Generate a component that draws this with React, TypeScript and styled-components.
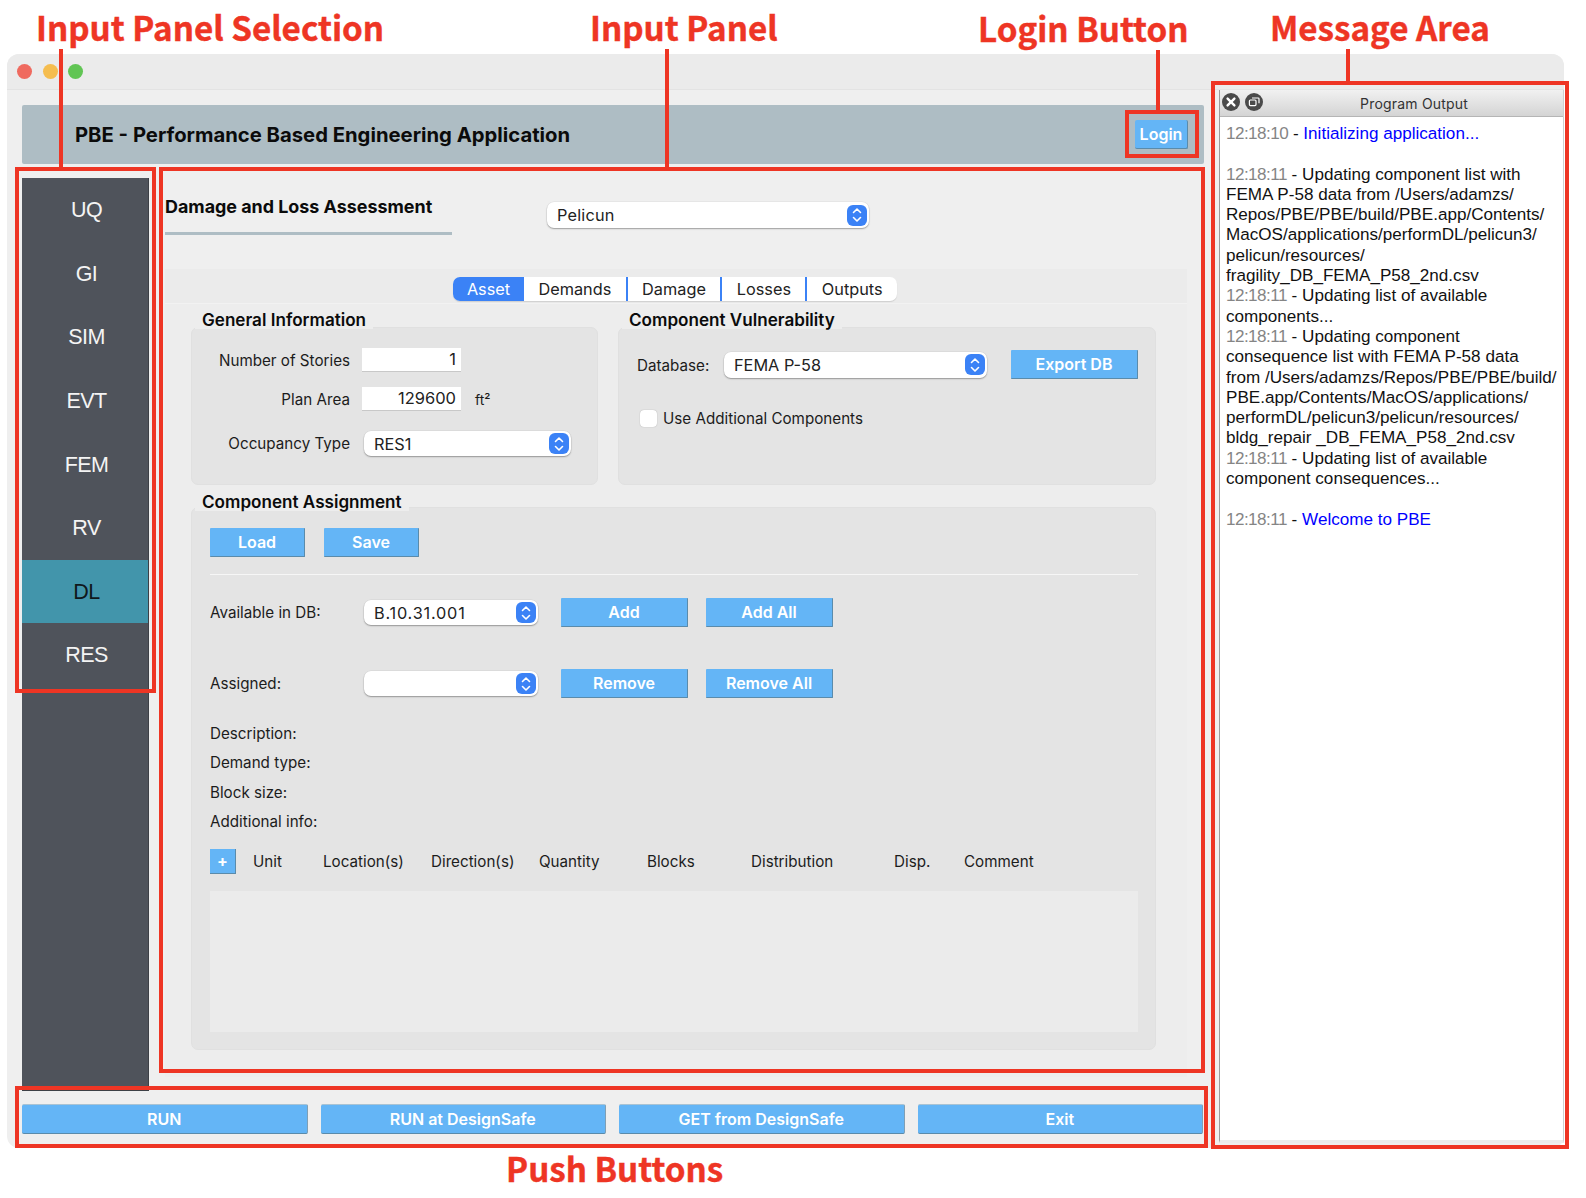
import styled, { createGlobalStyle } from 'styled-components';

const GlobalStyle = createGlobalStyle`
    html, body {
        margin: 0;
        padding: 0;
        background: #fff;
    }
    body {
        font-family: Inter, 'Liberation Sans', sans-serif;
        color: #111;
    }
`;

const NAV_ITEMS = ['UQ', 'GI', 'SIM', 'EVT', 'FEM', 'RV', 'DL', 'RES'];
const TABS = ['Asset', 'Demands', 'Damage', 'Losses', 'Outputs'];
const TABLE_COLUMNS = ['Unit', 'Location(s)', 'Direction(s)', 'Quantity', 'Blocks', 'Distribution', 'Disp.', 'Comment'];
const INFO_LINES = ['Description:', 'Demand type:', 'Block size:', 'Additional info:'];
const FOOTER_BUTTONS = ['RUN', 'RUN at DesignSafe', 'GET from DesignSafe', 'Exit'];

const LOG_LINES: { time?: string; text: string; blue?: boolean }[] = [
    { time: '12:18:10', text: 'Initializing application...', blue: true },
    { text: '' },
    { time: '12:18:11', text: 'Updating component list with' },
    { text: 'FEMA P-58 data from /Users/adamzs/' },
    { text: 'Repos/PBE/PBE/build/PBE.app/Contents/' },
    { text: 'MacOS/applications/performDL/pelicun3/' },
    { text: 'pelicun/resources/' },
    { text: 'fragility_DB_FEMA_P58_2nd.csv' },
    { time: '12:18:11', text: 'Updating list of available' },
    { text: 'components...' },
    { time: '12:18:11', text: 'Updating component' },
    { text: 'consequence list with FEMA P-58 data' },
    { text: 'from /Users/adamzs/Repos/PBE/PBE/build/' },
    { text: 'PBE.app/Contents/MacOS/applications/' },
    { text: 'performDL/pelicun3/pelicun/resources/' },
    { text: 'bldg_repair _DB_FEMA_P58_2nd.csv' },
    { time: '12:18:11', text: 'Updating list of available' },
    { text: 'component consequences...' },
    { text: '' },
    { time: '12:18:11', text: 'Welcome to PBE', blue: true },
];

const Stepper = () => (
    <StepperBox>
        <svg width="12" height="18" viewBox="0 0 12 18" fill="none" stroke="#fff" strokeWidth="1.6" strokeLinecap="round" strokeLinejoin="round">
            <path d="M2.5 6.5 6 3l3.5 3.5" />
            <path d="M2.5 11.5 6 15l3.5-3.5" />
        </svg>
    </StepperBox>
);

interface ComboBoxProps {
    value?: string;
    width: number;
    height?: number;
    tracking?: number;
}

const ComboBox = ({ value, width, height = 25, tracking = 0 }: ComboBoxProps) => (
    <Combo $width={width} $height={height} $tracking={tracking}>
        <span>{value}</span>
        <Stepper />
    </Combo>
);

const App = () => {
    return (
        <Page>
            <GlobalStyle />
            <AppWindow>
                <TitleBar>
                    <Light $color="#ef6a5f" />
                    <Light $color="#f5bd4f" />
                    <Light $color="#61c554" />
                </TitleBar>
                <Content>
                    <Header>
                        <h1>PBE - Performance Based Engineering Application</h1>
                        <LoginButton>Login</LoginButton>
                    </Header>
                    <MainRow>
                        <Sidebar>
                            {NAV_ITEMS.map((item) => (
                                <NavItem key={item} $active={item === 'DL'}>
                                    {item}
                                </NavItem>
                            ))}
                        </Sidebar>
                        <Panel>
                            <PanelHead>
                                <PanelTitle>Damage and Loss Assessment</PanelTitle>
                                <PanelSelect>
                                    <ComboBox value="Pelicun" width={322} height={26} tracking={0.2} />
                                </PanelSelect>
                            </PanelHead>
                            <TabBand>
                                <TabBar>
                                    {TABS.map((tab, i) => (
                                        <Tab key={tab} $active={i === 0} $divider={i > 1}>
                                            {tab}
                                        </Tab>
                                    ))}
                                </TabBar>
                                <TabPane>
                                    <GroupRow>
                                        <GroupBox $width={407} $height={158}>
                                            <Legend>General Information</Legend>
                                            <StoryRow>
                                                <FieldLabel>Number of Stories</FieldLabel>
                                                <NumberInput>1</NumberInput>
                                            </StoryRow>
                                            <AreaRow>
                                                <FieldLabel>Plan Area</FieldLabel>
                                                <NumberInput>129600</NumberInput>
                                                <Unit>ft²</Unit>
                                            </AreaRow>
                                            <OccupancyRow>
                                                <FieldLabel>Occupancy Type</FieldLabel>
                                                <ComboBox value="RES1" width={207} />
                                            </OccupancyRow>
                                        </GroupBox>
                                        <GroupBox $width={538} $height={158}>
                                            <Legend>Component Vulnerability</Legend>
                                            <DatabaseRow>
                                                <DatabaseLabel>Database:</DatabaseLabel>
                                                <ComboBox value="FEMA P-58" width={263} height={26} />
                                                <BlueButton $width={127}>Export DB</BlueButton>
                                            </DatabaseRow>
                                            <CheckRow>
                                                <CheckBox />
                                                <span>Use Additional Components</span>
                                            </CheckRow>
                                        </GroupBox>
                                    </GroupRow>
                                    <AssignBox>
                                        <AssignLegend>Component Assignment</AssignLegend>
                                        <FileButtons>
                                            <BlueButton $width={95}>Load</BlueButton>
                                            <BlueButton $width={95}>Save</BlueButton>
                                        </FileButtons>
                                        <Divider />
                                        <AvailableRow>
                                            <AssignLabel>Available in DB:</AssignLabel>
                                            <ComboBox value="B.10.31.001" width={174} tracking={0.8} />
                                            <BlueButton $width={127}>Add</BlueButton>
                                            <BlueButton $width={127}>Add All</BlueButton>
                                        </AvailableRow>
                                        <AssignedRow>
                                            <AssignLabel>Assigned:</AssignLabel>
                                            <ComboBox width={174} />
                                            <BlueButton $width={127}>Remove</BlueButton>
                                            <BlueButton $width={127}>Remove All</BlueButton>
                                        </AssignedRow>
                                        <InfoList>
                                            {INFO_LINES.map((line) => (
                                                <div key={line}>{line}</div>
                                            ))}
                                        </InfoList>
                                        <TableHead>
                                            <PlusButton>+</PlusButton>
                                            {TABLE_COLUMNS.map((col) => (
                                                <span key={col}>{col}</span>
                                            ))}
                                        </TableHead>
                                        <TableBody />
                                    </AssignBox>
                                </TabPane>
                            </TabBand>
                        </Panel>
                    </MainRow>
                    <Footer>
                        {FOOTER_BUTTONS.map((label) => (
                            <FooterButton key={label}>{label}</FooterButton>
                        ))}
                    </Footer>
                </Content>
            </AppWindow>

            <MessageWindow>
                <MessageTitle>
                    <DockIcon>
                        <svg width="18" height="18" viewBox="0 0 18 18">
                            <circle cx="9" cy="9" r="9" fill="#4a4a4a" />
                            <path d="M5.6 5.6l6.8 6.8M12.4 5.6l-6.8 6.8" stroke="#fff" strokeWidth="2.4" strokeLinecap="round" />
                        </svg>
                    </DockIcon>
                    <DockIcon>
                        <svg width="18" height="18" viewBox="0 0 18 18" fill="none">
                            <circle cx="9" cy="9" r="9" fill="#4a4a4a" />
                            <rect x="4.4" y="7" width="6.6" height="5.6" rx="1" stroke="#fff" strokeWidth="1.2" />
                            <path d="M7 5h6.2a.8.8 0 0 1 .8.8v4.4" stroke="#fff" strokeWidth="1.2" />
                        </svg>
                    </DockIcon>
                    <MessageCaption>Program Output</MessageCaption>
                </MessageTitle>
                <MessageBody>
                    {LOG_LINES.map((line, i) => (
                        <LogLine key={i}>
                            {line.time && <LogTime>{line.time}</LogTime>}
                            {line.time && ' - '}
                            {line.blue ? <LogBlue>{line.text}</LogBlue> : line.text}
                        </LogLine>
                    ))}
                </MessageBody>
            </MessageWindow>

            <Callout $left={36} $top={4}>Input Panel Selection</Callout>
            <Callout $left={590} $top={4}>Input Panel</Callout>
            <Callout $left={978} $top={5}>Login Button</Callout>
            <Callout $left={1270} $top={4}>Message Area</Callout>
            <Callout $left={506} $top={1145}>Push Buttons</Callout>

            <Leader $left={59} $top={49} $height={118} />
            <Leader $left={665} $top={49} $height={118} />
            <Leader $left={1156} $top={50} $height={60} />
            <Leader $left={1346} $top={49} $height={33} />

            <Frame $left={15} $top={167} $width={141} $height={526} />
            <Frame $left={159} $top={167} $width={1046} $height={906} />
            <Frame $left={1125} $top={110} $width={74} $height={48} />
            <Frame $left={15} $top={1086} $width={1193} $height={62} />
            <Frame $left={1211} $top={81} $width={358} $height={1068} />
        </Page>
    );
};

const Page = styled.div`
    position: relative;
    width: 1586px;
    height: 1198px;
    box-sizing: border-box;
    padding: 54px 0 0 7px;
    overflow: hidden;
`;

const AppWindow = styled.div`
    width: 1557px;
    height: 1094px;
    background: #efefef;
    border-radius: 12px;
    overflow: hidden;
`;

const TitleBar = styled.div`
    height: 35px;
    box-sizing: content-box;
    display: flex;
    align-items: center;
    gap: 10.5px;
    padding-left: 10px;
    background: #ebebeb;
    border-bottom: 1px solid #e3e3e3;
`;

const Light = styled.span<{ $color: string }>`
    width: 15px;
    height: 15px;
    border-radius: 50%;
    background: ${(props) => props.$color};
`;

const Content = styled.div`
    width: 1182px;
    padding: 15px 0 0 15px;
`;

const Header = styled.div`
    height: 59px;
    display: flex;
    align-items: center;
    justify-content: space-between;
    padding: 0 16px 0 53px;
    background: #aebdc4;
    border-radius: 2px;

    h1 {
        margin: 0;
        font-size: 20.25px;
        font-weight: 700;
        color: #0b0b0b;
    }
`;

const LoginButton = styled.div`
    width: 52px;
    height: 28px;
    display: flex;
    align-items: center;
    justify-content: center;
    background: #64b5f6;
    border-bottom: 1px solid #5a8bab;
    border-right: 1px solid #5a8bab;
    border-radius: 2px;
    color: #fff;
    font-size: 16px;
    font-weight: 600;
`;

const MainRow = styled.div`
    display: flex;
    height: 927px;
`;

const Sidebar = styled.div`
    width: 127px;
    height: 913px;
    margin-top: 14px;
    box-sizing: border-box;
    background: #4f535b;
    border-right: 1px solid #3d4046;
    border-bottom: 1px solid #3d4046;
`;

const NavItem = styled.div<{ $active: boolean }>`
    height: 63.6px;
    box-sizing: border-box;
    padding: 2px 0 0 3px;
    display: flex;
    align-items: center;
    justify-content: center;
    font-family: 'Liberation Sans', Arial, sans-serif;
    font-size: 21.5px;
    letter-spacing: -0.6px;
    color: ${(props) => (props.$active ? '#10181c' : '#f4f4f4')};
    background: ${(props) => (props.$active ? '#4295ab' : 'transparent')};
`;

const Panel = styled.div`
    flex: 1;
    margin-left: 16px;
    padding-top: 30px;
    height: 913px;
    box-sizing: border-box;
`;

const PanelHead = styled.div`
    display: flex;
    height: 75px;
`;

const PanelTitle = styled.div`
    width: 287px;
    height: 24px;
    padding-bottom: 14px;
    border-bottom: 3px solid #aebdc4;
    line-height: 26px;
    font-size: 17.9px;
    font-weight: 700;
    color: #0b0b0b;
`;

const PanelSelect = styled.div`
    margin: 8px 0 0 95px;
`;

const Combo = styled.div<{ $width: number; $height: number; $tracking: number }>`
    width: ${(props) => props.$width}px;
    height: ${(props) => props.$height}px;
    box-sizing: border-box;
    display: flex;
    align-items: center;
    justify-content: space-between;
    padding: 0 2px 0 10px;
    background: #fff;
    border-radius: 7px;
    box-shadow: 0 1px 1.5px rgba(0, 0, 0, 0.32), 0 0 0 0.5px rgba(0, 0, 0, 0.06);
    font-size: 16.3px;
    letter-spacing: ${(props) => props.$tracking}px;
    color: #222;
`;

const StepperBox = styled.div`
    width: 20px;
    height: 21px;
    display: flex;
    align-items: center;
    justify-content: center;
    background: #3b82f6;
    border-radius: 6px;
`;

const TabBand = styled.div`
    width: 1022px;
    height: 808px;
    padding-top: 8px;
    box-sizing: border-box;
    background: #ebebeb;
`;

const TabBar = styled.div`
    width: 444px;
    height: 24px;
    margin-left: 288px;
    display: flex;
    background: #fff;
    border-radius: 7px;
    box-shadow: 0 1px 1px rgba(0, 0, 0, 0.12);
`;

const Tab = styled.div<{ $active: boolean; $divider: boolean }>`
    flex: ${(props) => (props.$active ? '0 0 71px' : '1 1 auto')};
    display: flex;
    align-items: center;
    justify-content: center;
    font-size: 16.3px;
    color: ${(props) => (props.$active ? '#fff' : '#222')};
    background: ${(props) => (props.$active ? '#3b82f6' : 'transparent')};
    border-radius: ${(props) => (props.$active ? '7px 0 0 7px' : '0')};
    border-left: ${(props) => (props.$divider ? '2px solid #3b82f6' : 'none')};
`;

const TabPane = styled.div`
    height: 774px;
    margin-top: 2px;
    padding: 23px 31px 0 26px;
    box-sizing: border-box;
    background: #ededed;
    border-top: 1px solid #f2f2f2;
`;

const GroupRow = styled.div`
    display: flex;
    gap: 20px;
`;

const GroupBox = styled.div<{ $width: number; $height: number }>`
    position: relative;
    width: ${(props) => props.$width}px;
    height: ${(props) => props.$height}px;
    box-sizing: border-box;
    background: #e4e4e4;
    border: 1px solid #e0e0e0;
    border-radius: 7px;
    font-size: 15.2px;
    color: #1c1c1c;
`;

const AssignBox = styled(GroupBox).attrs({ $width: 965, $height: 543 })`
    margin-top: 22px;
    padding: 20px 18px;
`;

const Legend = styled.div`
    position: absolute;
    top: -18px;
    left: 3px;
    padding: 0 7px;
    height: 19px;
    line-height: 19px;
    background: #ededed;
    font-size: 17.1px;
    font-weight: 600;
    color: #0b0b0b;
`;

const AssignLegend = styled(Legend)`
    top: -16px;
`;

const FieldRow = styled.div`
    display: flex;
    align-items: center;
`;

const StoryRow = styled(FieldRow)`
    margin-top: 20px;
`;

const AreaRow = styled(FieldRow)`
    margin-top: 15px;
`;

const OccupancyRow = styled(FieldRow)`
    margin-top: 20px;

    & > div:last-child {
        margin-left: 2px;
    }
`;

const FieldLabel = styled.div`
    width: 158px;
    margin-right: 12px;
    text-align: right;
`;

const NumberInput = styled.div`
    width: 99px;
    height: 24px;
    box-sizing: border-box;
    padding-right: 5px;
    line-height: 23px;
    text-align: right;
    background: #fff;
    border-bottom: 1px solid #c8c8c8;
    font-size: 16.5px;
    color: #222;
`;

const Unit = styled.div`
    margin-left: 14px;
    font-size: 14px;
`;

const DatabaseRow = styled(FieldRow)`
    margin-top: 22px;
    padding-left: 18px;

    & > div:last-child {
        margin-left: 24px;
    }
`;

const DatabaseLabel = styled.div`
    width: 87px;
    padding-top: 2px;
`;

const CheckRow = styled(FieldRow)`
    margin: 30px 0 0 21px;
    gap: 6px;
`;

const CheckBox = styled.div`
    width: 17px;
    height: 17px;
    background: #fff;
    border-radius: 4px;
    box-shadow: 0 0 1px rgba(0, 0, 0, 0.35);
`;

const BlueButton = styled.div<{ $width: number }>`
    width: ${(props) => props.$width}px;
    height: 29px;
    box-sizing: border-box;
    display: flex;
    align-items: center;
    justify-content: center;
    background: #64b5f6;
    border-bottom: 1px solid #5a8bab;
    border-right: 1px solid #5a8bab;
    border-radius: 1px;
    color: #fff;
    font-size: 16px;
    font-weight: 600;
`;

const FileButtons = styled.div`
    display: flex;
    gap: 19px;
`;

const Divider = styled.div`
    width: 928px;
    height: 1px;
    margin-top: 17px;
    background: #f6f6f6;
`;

const AssignRow = styled(FieldRow)`
    height: 29px;

    & > div:nth-child(3) {
        margin-left: 23px;
    }
    & > div:nth-child(4) {
        margin-left: 18px;
    }
`;

const AvailableRow = styled(AssignRow)`
    margin-top: 23px;
`;

const AssignedRow = styled(AssignRow)`
    margin-top: 42px;
`;

const AssignLabel = styled.div`
    width: 154px;
`;

const InfoList = styled.div`
    margin-top: 21px;
    line-height: 29.3px;
`;

const TableHead = styled.div`
    display: grid;
    grid-template-columns: 43px 70px 108px 108px 108px 104px 143px 70px auto;
    align-items: center;
    height: 25px;
    margin-top: 13px;
`;

const PlusButton = styled.div`
    width: 26px;
    height: 25px;
    display: flex;
    align-items: center;
    justify-content: center;
    box-sizing: border-box;
    background: #64b5f6;
    border-bottom: 1px solid #5a8bab;
    border-right: 1px solid #5a8bab;
    color: #fff;
    font-size: 16px;
    font-weight: 700;
`;

const TableBody = styled.div`
    width: 928px;
    height: 141px;
    margin-top: 17px;
    background: #ebebeb;
`;

const Footer = styled.div`
    display: grid;
    grid-template-columns: repeat(4, 285.5px);
    column-gap: 13px;
    margin-top: 13px;
`;

const FooterButton = styled.div`
    height: 30px;
    box-sizing: border-box;
    display: flex;
    align-items: center;
    justify-content: center;
    background: #64b5f6;
    border-top: 1px solid #a9c3d4;
    border-bottom: 1px solid #5a8bab;
    border-right: 1px solid #7f9fb5;
    border-radius: 2px;
    color: #fff;
    font-size: 16px;
    font-weight: 600;
`;

const MessageWindow = styled.div`
    position: absolute;
    left: 1219px;
    top: 90px;
    width: 345px;
    height: 1053px;
    display: flex;
    flex-direction: column;
    background: #fff;
    border-left: 1px solid #9c9c9c;
    border-right: 1px solid #cfcfcf;
    border-bottom: 3px solid #ececec;
    box-sizing: border-box;
`;

const MessageTitle = styled.div`
    position: relative;
    flex: 0 0 27px;
    display: flex;
    align-items: center;
    gap: 5px;
    padding: 0 0 2px 2px;
    box-sizing: border-box;
    background: linear-gradient(#f1f1f1, #d4d4d4);
    border-bottom: 1px solid #b5b5b5;
`;

const DockIcon = styled.span`
    display: flex;
`;

const MessageCaption = styled.span`
    position: absolute;
    left: 140px;
    top: 5px;
    font-size: 14px;
    letter-spacing: 0.2px;
    color: #333;
`;

const MessageBody = styled.div`
    flex: 1;
    padding: 7px 0 0 6px;
    font-family: 'Liberation Sans', Arial, sans-serif;
    font-size: 17.1px;
    line-height: 20.3px;
    color: #111;
`;

const LogLine = styled.div`
    height: 20.3px;
    white-space: pre;
`;

const LogTime = styled.span`
    color: #858585;
    letter-spacing: -0.55px;
`;

const LogBlue = styled.span`
    color: #0000ff;
`;

const Callout = styled.div<{ $left: number; $top: number }>`
    position: absolute;
    left: ${(props) => props.$left}px;
    top: ${(props) => props.$top}px;
    font-family: 'Noto Sans CJK SC', Lato, sans-serif;
    font-size: 33.2px;
    line-height: 46px;
    font-weight: 700;
    white-space: nowrap;
    color: #ee3524;
    -webkit-text-stroke: 0.4px #ee3524;
`;

const Leader = styled.div<{ $left: number; $top: number; $height: number }>`
    position: absolute;
    left: ${(props) => props.$left}px;
    top: ${(props) => props.$top}px;
    width: 4px;
    height: ${(props) => props.$height}px;
    background: #ee3524;
`;

const Frame = styled.div<{ $left: number; $top: number; $width: number; $height: number }>`
    position: absolute;
    left: ${(props) => props.$left}px;
    top: ${(props) => props.$top}px;
    width: ${(props) => props.$width}px;
    height: ${(props) => props.$height}px;
    box-sizing: border-box;
    border: 4px solid #ee3524;
`;

export default App;
